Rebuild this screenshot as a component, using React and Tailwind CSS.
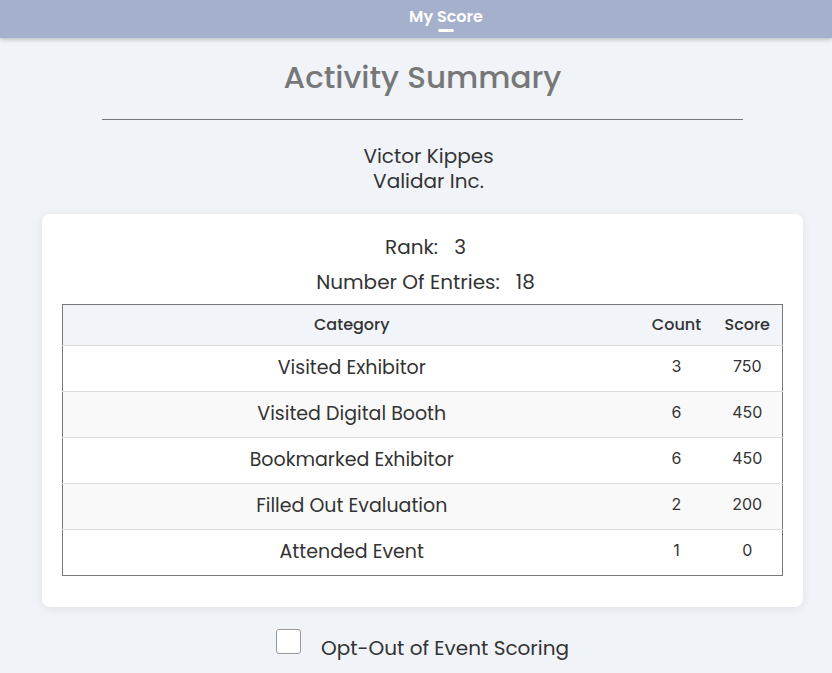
import { useState } from "react";

const rows = [
  { category: "Visited Exhibitor", count: 3, score: 750 },
  { category: "Visited Digital Booth", count: 6, score: 450 },
  { category: "Bookmarked Exhibitor", count: 6, score: 450 },
  { category: "Filled Out Evaluation", count: 2, score: 200 },
  { category: "Attended Event", count: 1, score: 0 },
];

export default function App() {
  const [optOut, setOptOut] = useState(false);

  return (
    <div className="h-screen overflow-hidden bg-[#f0f4f9] font-['Poppins','DejaVu_Sans',sans-serif] text-[#333]">
      {/* Top tab bar */}
      <div className="relative z-10 h-[38px] bg-[#a4b0cc] shadow-[0_2px_4px_rgba(0,0,0,0.2)] flex justify-center pl-[60px]">
        <div className="flex flex-col items-center pt-[6px]">
          <span className="text-white text-[16px] font-semibold leading-[22px]">My Score</span>
          <span className="mt-[1px] w-[16px] h-[3px] rounded-full bg-white" />
        </div>
      </div>

      <div className="w-[845px]">
        <h1 className="mt-[19px] text-center text-[31px] font-medium text-[#777] leading-[40px]">Activity Summary</h1>
        <hr className="mx-[102px] mt-[22px] border-t border-[#777]" />

        <div className="mt-[24px] pl-[12px] text-center text-[20px] leading-[25px]">
          <div>Victor Kippes</div>
          <div>Validar Inc.</div>
        </div>

        <div className="mx-[42px] mt-[20px] bg-white rounded-lg shadow-[0_2px_10px_rgba(0,0,0,0.08)] px-[20px] pt-[20px] pb-[31px]">
          <div className="pl-[6px] text-center text-[20px] leading-[26px]">
            Rank:<span className="ml-[16px]">3</span>
          </div>
          <div className="mt-[9px] pl-[6px] text-center text-[20px] leading-[26px]">
            Number Of Entries:<span className="ml-[16px]">18</span>
          </div>

          <table className="mt-[9px] w-full border border-[#777] border-collapse">
            <thead>
              <tr className="bg-[#f1f4f9] h-[41px] text-[16px]">
                <th className="font-medium">Category</th>
                <th className="w-[72px] font-medium">Count</th>
                <th className="w-[70px] font-medium">Score</th>
              </tr>
            </thead>
            <tbody>
              {rows.map((r, i) => (
                <tr key={r.category} className={`h-[46px] border-t border-[#ddd] ${i % 2 ? "bg-[#f9f9f9]" : "bg-white"}`}>
                  <td className="text-center text-[19px]">{r.category}</td>
                  <td className="text-center text-[16px] font-['Inter',sans-serif] pb-[5px]">{r.count}</td>
                  <td className="text-center text-[16px] font-['Inter',sans-serif] pb-[5px]">{r.score}</td>
                </tr>
              ))}
            </tbody>
          </table>
        </div>

        <label className="mt-[21px] flex items-start justify-center gap-[20px] cursor-pointer">
          <input
            type="checkbox"
            checked={optOut}
            onChange={(e) => setOptOut(e.target.checked)}
            className="appearance-none mt-[1px] w-[25px] h-[25px] rounded-[3px] border border-[#999] bg-white"
          />
          <span className="mt-[6px] text-[20px] leading-[28px]">Opt-Out of Event Scoring</span>
        </label>
      </div>
    </div>
  );
}
